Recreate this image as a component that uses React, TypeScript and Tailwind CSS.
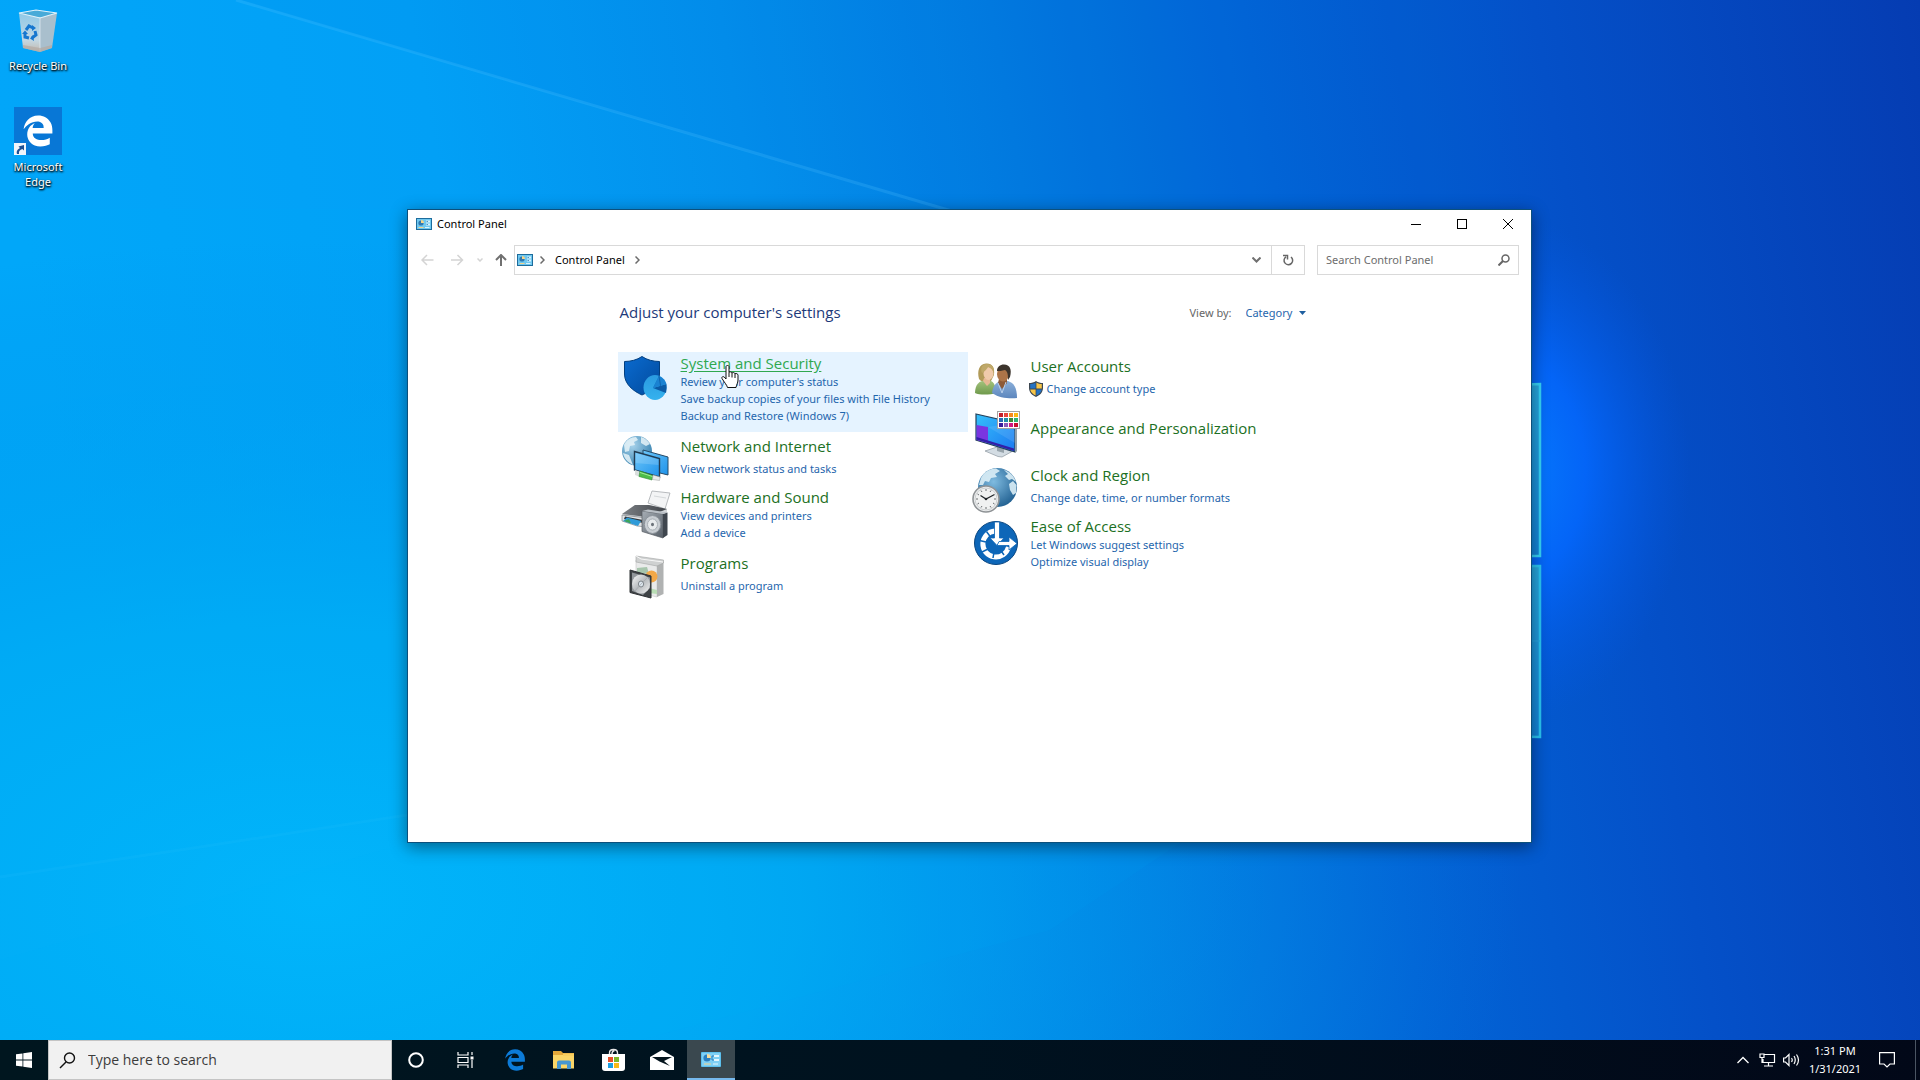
import React, { useState } from "react";

type Category = {
  title: string;
  links: string[];
  icon: React.ReactNode;
  hovered?: boolean;
  shield?: boolean;
};

const EDGE_PATH =
  "M486.286 243.671c0-44.032-7.754-84.465-28.801-122.4C416.498 47.879 343.912 8.001 258.893 8.001 118.962 7.724 40.617 113.214 26.056 227.679c42.429-61.312 117.073-121.376 220.375-124.966 0 0 109.666 0 99.419 104.957H169.997c6.369-37.386 18.554-58.986 34.339-78.926-75.048 34.893-121.85 96.096-120.742 188.315.83 71.448 50.124 144.836 120.743 171.976 83.357 31.843 192.776 7.2 240.132-21.324V363.307c-80.864 56.494-270.871 60.925-272.255-67.572h314.073v-52.064z";

const EdgeLogo = ({ className }: { className: string }) => (
  <svg viewBox="0 0 512 512" className={className} fill="currentColor" aria-hidden="true">
    <path d={EDGE_PATH} />
  </svg>
);

const Wallpaper = () => (
  <svg
    className="absolute inset-0 size-full"
    viewBox="0 0 1920 1080"
    preserveAspectRatio="xMidYMid slice"
    aria-hidden="true"
  >
    <defs>
      <linearGradient id="sky" x1="0" y1="0.1" x2="1" y2="0">
        <stop offset="0" stopColor="#02a6f9" />
        <stop offset="0.22" stopColor="#02a0f6" />
        <stop offset="0.38" stopColor="#0390ec" />
        <stop offset="0.52" stopColor="#027be0" />
        <stop offset="0.65" stopColor="#0264d6" />
        <stop offset="0.8" stopColor="#0450c8" />
        <stop offset="1" stopColor="#053cb2" />
      </linearGradient>
      <radialGradient id="lowerGlow" gradientUnits="userSpaceOnUse" cx="320" cy="900" r="1200" gradientTransform="matrix(1 0 0 0.55 0 405)">
        <stop offset="0" stopColor="#02b6fb" stopOpacity="0.95" />
        <stop offset="0.4" stopColor="#00aef4" stopOpacity="0.7" />
        <stop offset="1" stopColor="#008ae8" stopOpacity="0" />
      </radialGradient>
      <radialGradient id="logoGlow" gradientUnits="userSpaceOnUse" cx="1500" cy="470" r="190" gradientTransform="matrix(1 0 0 1.35 0 -164)">
        <stop offset="0" stopColor="#0680ff" />
        <stop offset="0.45" stopColor="#0468ff" stopOpacity="0.85" />
        <stop offset="1" stopColor="#0458e4" stopOpacity="0" />
      </radialGradient>
      <linearGradient id="pane" x1="0" y1="0" x2="0" y2="1">
        <stop offset="0" stopColor="#27a8e0" />
        <stop offset="1" stopColor="#1384da" />
      </linearGradient>
    </defs>
    <rect width="1920" height="1080" fill="url(#sky)" />
    <rect width="1920" height="1080" fill="url(#lowerGlow)" />
    <path d="M240 0L960 215H1500V0z" fill="#0060d8" opacity="0.08" />
    <path d="M236 0L955 212" stroke="#4cc0ff" strokeWidth="3" opacity="0.25" />
    <path d="M0 876L200 846L407 814V209H0z" fill="#00b8ff" opacity="0.06" />
    <path d="M0 877L200 847L407 815" stroke="#30c8ff" strokeWidth="3" fill="none" opacity="0.12" />
    <path d="M407 843H1180L1050 930L640 1040H0V960z" fill="#00c0ff" opacity="0.06" />
    <rect width="1920" height="1080" fill="url(#logoGlow)" />
    <path d="M1300 392L1540 384V556H1300z" fill="url(#pane)" stroke="#35d4f8" strokeWidth="2.5" />
    <path d="M1300 566H1540V737L1300 733z" fill="url(#pane)" stroke="#29c6f4" strokeWidth="2.5" />
    <path d="M1300 641H1540" stroke="#29a6e4" />
  </svg>
);

const PanelIcon = ({ className }: { className: string }) => (
  <svg viewBox="0 0 16 12" className={className} aria-hidden="true">
    <rect width="16" height="12" fill="#1d6c9c" />
    <rect x="1" y="1" width="14" height="10" fill="#6fc8f0" />
    <circle cx="5" cy="5" r="2.6" fill="#2f78b0" />
    <path d="M5 5V2A3 3 0 0 1 8 5z" fill="#f6d58a" />
    <path d="M10 2.5h4v2h-4zM10 5.5h4v2h-4z" fill="#d8f2fd" />
    <path d="M10.5 3.5h1.5M10.5 6.5h1.5" stroke="#2f78b0" strokeWidth="0.8" />
    <path d="M2.5 9.5h5" stroke="#f3d38c" />
    <path d="M9 9.5h4.5" stroke="#d8f2fd" />
  </svg>
);

const TaskbarPanelIcon = () => (
  <svg viewBox="0 0 20 15" className="h-[15px] w-5" aria-hidden="true">
    <rect width="20" height="15" rx="1" fill="#5cc0ee" />
    <rect x="1" y="1" width="18" height="13" fill="#7fd0f5" />
    <circle cx="6" cy="6" r="3.6" fill="#2b7fc0" />
    <path d="M6 6V2A4 4 0 0 1 10 6z" fill="#f7dc9a" />
    <path d="M13 3h5v2h-5zM13 7h5v2h-5z" fill="#e4f6fd" />
    <path d="M11 6V4h2M11 6v2h2" stroke="#2b7fc0" fill="none" />
    <path d="M3 12h7" stroke="#f3d38c" />
    <path d="M12 12h5" stroke="#e4f6fd" />
  </svg>
);

const SystemIcon = () => (
  <svg viewBox="0 0 48 48" className="size-12 overflow-visible" aria-hidden="true">
    <defs>
      <linearGradient id="shieldFill" x1="0" y1="0" x2="1" y2="1">
        <stop offset="0" stopColor="#0a6bd0" />
        <stop offset="1" stopColor="#024a9c" />
      </linearGradient>
      <linearGradient id="pieFill" x1="0" y1="0" x2="0" y2="1">
        <stop offset="0" stopColor="#2a9ae0" />
        <stop offset="1" stopColor="#35b2ee" />
      </linearGradient>
    </defs>
    <path d="M21 1.500C16 5 9.500 6.500 3.500 6.500V19C3.500 29 12 36 21 40C30 36 38.500 29 38.500 19V6.500C32.500 6.500 26 5 21 1.500z" fill="url(#shieldFill)" stroke="#023f80" />
    <ellipse cx="34" cy="32.500" rx="11.500" ry="12.500" fill="url(#pieFill)" />
    <path d="M32 33L38 21L41 27z" fill="#0f6cbc" />
    <path d="M32 33L45.500 29Q46 33 45 38z" fill="#0a5aa6" />
    <path d="M38 21Q44 23.500 45.500 29L32 33z" fill="#1a82d2" />
    <path d="M38 21L39.500 30.500L45 37" stroke="#0a5aa6" strokeWidth="0.800" fill="none" />
  </svg>
);

const NetworkIcon = () => (
  <svg viewBox="0 0 48 48" className="size-12 overflow-visible" aria-hidden="true">
    <defs>
      <radialGradient id="netGlobe" cx="0.35" cy="0.3" r="0.8">
        <stop offset="0" stopColor="#a9d4ec" />
        <stop offset="1" stopColor="#2f7cab" />
      </radialGradient>
      <linearGradient id="netScreen" x1="0" y1="0" x2="1" y2="1">
        <stop offset="0" stopColor="#6cc6fa" />
        <stop offset="1" stopColor="#1f93ea" />
      </linearGradient>
    </defs>
    <circle cx="16" cy="16" r="15" fill="url(#netGlobe)" />
    <path d="M3 10C5 5 10 2 15 2l2 3-4 2 1 3-5 1-1 5-4 1zM20 2c4 1 7 4 9 7l-4 2-5-3zM2 18l6 2 2 5 2 5C6 27 3 23 2 18z" fill="#e6f3f8" opacity="0.85" />
    <path d="M22 15L47 22V40L39 38L22 32z" fill="url(#netScreen)" stroke="#274a66" />
    <path d="M13.500 16.500L38.500 23.500V42L13.500 35z" fill="url(#netScreen)" stroke="#223c52" strokeWidth="1.400" />
    <path d="M14.500 18L37.500 24.500V30L14.500 28z" fill="#fff" opacity="0.16" />
    <path d="M14 35L20 37L19 42L14 40z" fill="#d9dedd" />
    <path d="M19 36L32 40.500L31 45L18 41.500z" fill="#4cbd48" stroke="#2f8d35" strokeWidth="0.600" />
    <path d="M19 37.500L31.500 41.500" stroke="#a2ea98" />
    <path d="M32 40L39 42L38.500 45.500L31.500 44.500z" fill="#e8ebea" stroke="#9a9f9d" strokeWidth="0.500" />
  </svg>
);

const HardwareIcon = () => (
  <svg viewBox="0 0 48 48" className="size-12 overflow-visible" aria-hidden="true">
    <defs>
      <linearGradient id="printerTop" x1="0" y1="0" x2="1" y2="0">
        <stop offset="0" stopColor="#7c8085" />
        <stop offset="1" stopColor="#3f4348" />
      </linearGradient>
      <linearGradient id="speakerFace" x1="0" y1="0" x2="1" y2="1">
        <stop offset="0" stopColor="#a6adb4" />
        <stop offset="1" stopColor="#565e67" />
      </linearGradient>
    </defs>
    <path d="M31 2L49 4L44 20L27 14z" fill="#f3f4f5" stroke="#a7abaf" strokeWidth="0.800" />
    <path d="M33 7L45 9" stroke="#d5d8da" />
    <path d="M14 16L28 16L46 20V29L28 36L1 30V26z" fill="#d3d6d9" />
    <path d="M14 16L28 16L46 20L26 28L1 25z" fill="url(#printerTop)" />
    <path d="M1 26L26 29V38L16 37L1 32z" fill="#e2e4e6" stroke="#70757a" strokeWidth="0.600" />
    <path d="M4 27.500L22 31V34L3 30z" fill="#33383d" />
    <path d="M6 28.500L20 32L17 37L2 32z" fill="#2f9ad8" />
    <path d="M3 32L8 30L10 34.500z" fill="#3fa557" />
    <path d="M21 22L42 25V49L21 42.500z" fill="url(#speakerFace)" stroke="#565c63" strokeWidth="0.700" />
    <path d="M42 25L46.500 23.500V46L42 49z" fill="#3f464e" />
    <path d="M21 22L27 20.500L46.500 23.500L42 25z" fill="#b9bfc5" />
    <ellipse cx="31.500" cy="35.500" rx="8.200" ry="9" fill="#c9ced3" stroke="#8d949b" />
    <ellipse cx="31.500" cy="35.500" rx="5" ry="5.600" fill="#e8ebed" stroke="#a8afb5" />
    <ellipse cx="31.500" cy="35.500" rx="1.500" ry="1.800" fill="#6b7279" />
  </svg>
);

const ProgramsIcon = () => (
  <svg viewBox="0 0 48 48" className="size-12 overflow-visible" aria-hidden="true">
    <defs>
      <linearGradient id="disc" x1="0" y1="0" x2="1" y2="1">
        <stop offset="0" stopColor="#fafafa" />
        <stop offset="0.500" stopColor="#b6babd" />
        <stop offset="1" stopColor="#f3f3f3" />
      </linearGradient>
    </defs>
    <path d="M15 8L36 12V45L15 40z" fill="#e9eaea" stroke="#c6c7c7" strokeWidth="0.600" />
    <path d="M36 12L42.500 9.500V42L36 45z" fill="#b0b2b2" />
    <path d="M15 4L42.500 8L42.500 11L36 14L15 10z" fill="#cfd1d1" stroke="#a3a5a5" strokeWidth="0.600" />
    <path d="M15 4L20 7L42 10" stroke="#f7f7f7" fill="none" />
    <path d="M16 16L26 15L28 22L16 21z" fill="#a7c5ac" />
    <circle cx="30.500" cy="24.500" r="6" fill="#f3a847" />
    <path d="M28 36L36 38V42L28 41z" fill="#b9ddb4" />
    <path d="M9 18L30 24V46L9 40.500z" fill="#3f4346" stroke="#2f3235" />
    <path d="M11 20.500L29 25.500V36L22 43L11 39z" fill="#92979b" />
    <ellipse cx="20" cy="32" rx="9" ry="9.500" fill="url(#disc)" />
    <ellipse cx="20" cy="32" rx="2.600" ry="3" fill="#dce6ee" stroke="#80868b" />
    <path d="M20 32L26 26M20 32L14 39" stroke="#a3a8ac" strokeWidth="0.700" />
  </svg>
);

const UsersIcon = () => (
  <svg viewBox="0 0 48 48" className="size-12 overflow-visible" aria-hidden="true">
    <defs>
      <linearGradient id="greenShirt" x1="0" y1="0" x2="0" y2="1">
        <stop offset="0" stopColor="#a5c37e" />
        <stop offset="1" stopColor="#6f9a4c" />
      </linearGradient>
      <linearGradient id="blueShirt" x1="0" y1="0" x2="0" y2="1">
        <stop offset="0" stopColor="#8cb0da" />
        <stop offset="1" stopColor="#5c86bd" />
      </linearGradient>
    </defs>
    <path d="M8 24C6 16 8 9 15 8.500C21 8 24 12 23 20L20 26H10z" fill="#b19a58" />
    <path d="M4 38C4 29 9 25.500 14 25.500H19C23 27 25 31 25 38C19 40 8 40 4 38z" fill="url(#greenShirt)" />
    <path d="M13 23H19V28L16 31L12 26z" fill="#e6b894" />
    <ellipse cx="17.500" cy="18.500" rx="5" ry="6.500" fill="#efcaaa" />
    <path d="M11 18C13 17 16 14 17 12C20 13 22 15 22.500 18C24 12 20 9 16 9C11 9 9 13 11 18z" fill="#bfa869" />
    <path d="M21 38C22 30 26 26 31 26H37C43 28 46 33 46 43C39 44 28 43 21 38z" fill="url(#blueShirt)" />
    <path d="M28 24H36V28L31 34L27 28z" fill="#8d5a37" />
    <ellipse cx="32" cy="19" rx="6" ry="7.500" fill="#ac7448" />
    <path d="M26 16C26 12 29 9.500 33 9.500C39 10 41 14 39 22L37 25C37 20 37 17 34 15C31 16 28 16 26 16z" fill="#3c342c" />
    <path d="M27 28L31 38L35 27" fill="none" stroke="#b9cfea" />
  </svg>
);

const SWATCHES = ["#c4202b", "#e8453c", "#f58a1f", "#fdb813", "#2b6cb5", "#1f8fa8", "#3f8a3a", "#2fb574", "#3a1d9c", "#8a5cb8", "#d01880", "#c8102e"];

const AppearanceIcon = () => (
  <svg viewBox="0 0 48 48" className="size-12 overflow-visible" aria-hidden="true">
    <defs>
      <linearGradient id="screen" x1="0" y1="0" x2="1" y2="1">
        <stop offset="0" stopColor="#35c0fb" />
        <stop offset="1" stopColor="#1c78f0" />
      </linearGradient>
    </defs>
    <path d="M14 42L26 38L41 42.500L31 48L27 47.500z" fill="#d3dce3" stroke="#8c979f" strokeWidth="0.700" />
    <path d="M26 38L33 40V44L26 42z" fill="#97a3ab" />
    <path d="M5 5L44 14V43L5 31z" fill="url(#screen)" stroke="#23405a" strokeWidth="1.200" />
    <path d="M44 14L46 13.500V42.500L44 43z" fill="#93a0aa" />
    <path d="M5.500 16L17 18V34L5.500 31z" fill="#7a35e0" />
    <path d="M5.500 28L43 39.500V42L5.500 30.500z" fill="#321fa8" />
    <path d="M17 18L36 15L44 22V34z" fill="#fff" opacity="0.1" />
    <rect x="26.500" y="2.500" width="22" height="17" fill="#fff" stroke="#a3a3a3" />
    {SWATCHES.map((color, i) => (
      <rect key={color} x={28 + (i % 4) * 5} y={4 + Math.floor(i / 4) * 5} width="4" height="4" fill={color} />
    ))}
  </svg>
);

const ClockIcon = () => (
  <svg viewBox="0 0 48 48" className="size-12 overflow-visible" aria-hidden="true">
    <defs>
      <radialGradient id="clockGlobe" cx="0.400" cy="0.350" r="0.700">
        <stop offset="0" stopColor="#7fbbe0" />
        <stop offset="1" stopColor="#205f90" />
      </radialGradient>
    </defs>
    <circle cx="26.500" cy="23.500" r="19.500" fill="url(#clockGlobe)" />
    <path d="M10 14C13 8 18 5 25 4.500L29 7L24 10L26 13L20 14L18 18L14 17L12 21L8 21zM33 6C39 8 43 12 45 18L41 15L38 16L34 12L37 10zM38 20L42 17L45.500 21L45 29L42 31L39 26z" fill="#dceef6" opacity="0.9" />
    <circle cx="15" cy="35" r="13" fill="#eeeff0" stroke="#8f9396" strokeWidth="1.600" />
    <circle cx="15" cy="35" r="11" fill="#f0f1f1" stroke="#c3c6c8" strokeWidth="0.800" />
    <path d="M15 25v2M15 43v2M5 35h2M23 35h2M10 26.500l1 1.500M20 26.500l-1 1.500M10 43.500l1-1.500M20 43.500l-1-1.500M6.500 30l1.500 1M6.500 40l1.500-1M23.500 40l-1.500-1" stroke="#6a6e71" />
    <path d="M9.500 31.500L15 35L23.500 30.500" fill="none" stroke="#22262a" strokeWidth="1.300" />
    <circle cx="15" cy="35" r="1.300" fill="#22262a" />
  </svg>
);

const EaseIcon = () => (
  <svg viewBox="0 0 48 48" className="size-12 overflow-visible" aria-hidden="true">
    <circle cx="25" cy="25" r="21.500" fill="#0d66b8" stroke="#0a4680" />
    <path d="M24 13A13 13 0 1 0 37.500 29" fill="none" stroke="#fff" strokeWidth="5" />
    <path d="M15.500 13.500L19.500 19M8.500 22.500L15 24M11 34L17 31M22 40L23 34M33 37L29.500 32" stroke="#0d66b8" strokeWidth="1.500" />
    <path d="M23.500 4H28.500V20H33L26 27.500L19 20H23.500z" fill="#fff" stroke="#0d66b8" strokeWidth="0.800" />
    <path d="M28 23.500H38V19L46 25.500L38 32V27.500H26z" fill="#fff" stroke="#0d66b8" strokeWidth="0.800" />
  </svg>
);

const UacShield = () => (
  <svg viewBox="0 0 14 16" className="h-4 w-3.5" aria-hidden="true">
    <path d="M7 0C5 1.500 2.500 2 0 2V7C0 11.500 3.500 14.500 7 16C10.500 14.500 14 11.500 14 7V2C11.500 2 9 1.500 7 0z" fill="#3b4650" />
    <path d="M6.600 1.500C5 2.600 3 3 1.200 3V7.600H6.600z" fill="#2372c4" />
    <path d="M7.400 1.500C9 2.600 11 3 12.800 3V7.600H7.400z" fill="#f7c548" />
    <path d="M1.200 8.400H6.600V14.500C4 13.200 1.600 11.200 1.200 8.400z" fill="#f7c548" />
    <path d="M12.800 8.400H7.400V14.500C10 13.200 12.400 11.200 12.800 8.400z" fill="#2372c4" />
  </svg>
);

const LEFT: Category[] = [
  {
    title: "System and Security",
    links: ["Review your computer's status", "Save backup copies of your files with File History", "Backup and Restore (Windows 7)"],
    icon: <SystemIcon />,
    hovered: true,
  },
  { title: "Network and Internet", links: ["View network status and tasks"], icon: <NetworkIcon /> },
  { title: "Hardware and Sound", links: ["View devices and printers", "Add a device"], icon: <HardwareIcon /> },
  { title: "Programs", links: ["Uninstall a program"], icon: <ProgramsIcon /> },
];

const RIGHT: Category[] = [
  { title: "User Accounts", links: ["Change account type"], icon: <UsersIcon />, shield: true },
  { title: "Appearance and Personalization", links: [], icon: <AppearanceIcon /> },
  { title: "Clock and Region", links: ["Change date, time, or number formats"], icon: <ClockIcon /> },
  { title: "Ease of Access", links: ["Let Windows suggest settings", "Optimize visual display"], icon: <EaseIcon /> },
];

const CategoryTile = ({ item }: { item: Category }) => {
  const tall = item.links.length > 1;
  return (
    <li className={`flex gap-3 pl-[3px] ${item.hovered ? "bg-[#e5f3ff]" : ""} ${tall ? "pb-2" : "pb-[3px]"}`}>
      <div className="pt-[3px]">{item.icon}</div>
      <div className={tall ? "pt-px" : item.links.length ? "pt-1" : "pt-3 pb-4"}>
        <h2 className="font-['Open_Sans',sans-serif] text-[15px] leading-5">
          <a href="#" className={item.hovered ? "text-[#2fa84f] underline underline-offset-2" : "text-[#1c7023]"}>
            {item.title}
          </a>
        </h2>
        <ul className={`text-[11px] leading-[17px] text-[#1f66ad] ${tall ? "" : "pt-1"}`}>
          {item.links.map((link) => (
            <li key={link} className={item.shield ? "-ml-0.5 flex items-center gap-1" : ""}>
              {item.shield && <UacShield />}
              <a href="#">{link}</a>
            </li>
          ))}
        </ul>
      </div>
    </li>
  );
};

const TitleBar = () => (
  <header className="flex h-7 items-center pl-2">
    <PanelIcon className="h-3 w-4" />
    <h1 className="ml-[5px] flex-1 text-[11px] text-black">Control Panel</h1>
    <button type="button" aria-label="Minimize" className="grid h-full w-[46px] place-items-center">
      <svg width="10" height="10" shapeRendering="crispEdges"><path d="M0 5.500h10" stroke="#000" /></svg>
    </button>
    <button type="button" aria-label="Maximize" className="grid h-full w-[46px] place-items-center">
      <svg width="10" height="10"><rect x="0.500" y="0.500" width="9" height="9" fill="none" stroke="#000" /></svg>
    </button>
    <button type="button" aria-label="Close" className="grid h-full w-[46px] place-items-center">
      <svg width="10" height="10"><path d="M0 0L10 10M10 0L0 10" stroke="#000" /></svg>
    </button>
  </header>
);

const Chevron = () => (
  <svg width="5" height="8" fill="none" stroke="#6b6b6b" strokeWidth="1.500" aria-hidden="true"><path d="M0.500 0.500L4 4L0.500 7.500" /></svg>
);

const NavBar = () => (
  <div className="flex h-[30px] pr-3">
    <div className="flex w-[106px] items-center pl-[13px]">
      <button type="button" aria-label="Back" className="w-[30px]">
        <svg width="13" height="12" fill="none" stroke="#d4d4d4" strokeWidth="1.500"><path d="M12.500 6H1M6 1L1 6L6 11" /></svg>
      </button>
      <button type="button" aria-label="Forward" className="w-[26px]">
        <svg width="13" height="12" fill="none" stroke="#d4d4d4" strokeWidth="1.500"><path d="M0 6H11.500M6.500 1L11.500 6L6.500 11" /></svg>
      </button>
      <button type="button" aria-label="Recent locations" className="w-[18px]">
        <svg width="6" height="4" fill="none" stroke="#d4d4d4" strokeWidth="1.500"><path d="M0.500 0.500L3 3L5.500 0.500" /></svg>
      </button>
      <button type="button" aria-label="Up">
        <svg width="12" height="12" fill="none" stroke="#707070" strokeWidth="2"><path d="M6 12V1M1 6L6 1L11 6" /></svg>
      </button>
    </div>
    <div className="flex flex-1 border border-[#d9d9d9]">
      <nav aria-label="Address" className="flex flex-1 items-center pl-0.5 text-[11px] text-black">
        <PanelIcon className="mr-[7px] h-3 w-4" />
        <Chevron />
        <button type="button" className="mx-2.5">Control Panel</button>
        <Chevron />
      </nav>
      <button type="button" aria-label="Previous locations" className="grid w-[30px] place-items-center">
        <svg width="9" height="6" fill="none" stroke="#707070" strokeWidth="2"><path d="M0.500 0.500L4.500 4.500L8.500 0.500" /></svg>
      </button>
      <button type="button" aria-label="Refresh" className="grid w-[33px] place-items-center border-l border-[#d9d9d9]">
        <svg width="12" height="12" fill="none" stroke="#666" strokeWidth="1.500"><path d="M9 3A4.300 4.300 0 1 1 4 2.800M1 1.500H5.500V5.500" /></svg>
      </button>
    </div>
    <label className="ml-3 flex w-[202px] items-center border border-[#d9d9d9] pr-2 pl-2">
      <input
        type="text"
        aria-label="Search Control Panel"
        placeholder="Search Control Panel"
        className="min-w-0 flex-1 text-[11px] outline-none placeholder:text-[#6d6d6d]"
      />
      <svg width="12" height="12" fill="none" stroke="#666" strokeWidth="1.500" aria-hidden="true"><circle cx="7.500" cy="4.500" r="3.500" /><path d="M5 7L0.500 11.500" strokeWidth="2" /></svg>
    </label>
  </div>
);

const HandCursor = () => (
  <svg viewBox="0 0 18 24" className="pointer-events-none absolute top-[365px] left-[721px] h-6 w-[18px]" aria-hidden="true">
    <path
      d="M5 1.500C5 0.200 8 0.200 8 1.500V7.500C8.500 6.500 10.700 6.700 11 8C11.700 7.200 13.700 7.500 14 8.700C15 8.200 17 8.700 17 10.200V15C17 18 15.500 19.500 15 22.500H6.500C6 20 3 17 1 13.500C0.300 12 2 11 3.200 12L5 14z"
      fill="#fff"
      stroke="#111"
    />
    <path d="M8 7.500V12M11 8V12.500M14 8.700V13" stroke="#111" />
  </svg>
);

const ControlPanelWindow = () => (
  <main className="absolute top-[209px] left-[407px] flex h-[634px] w-[1125px] flex-col border border-[#0c507c] bg-white shadow-[0_4px_16px_rgba(0,0,0,0.45)]">
    <TitleBar />
    <div className="h-[7px]" />
    <NavBar />
    <div className="mx-auto mt-[27px] w-[704px] pr-1">
      <div className="flex items-end pr-3 pl-0.5">
        <p className="flex-1 font-['Open_Sans',sans-serif] text-[15px] leading-5 text-[#1d3a7a]">Adjust your computer's settings</p>
        <label htmlFor="view-by" className="text-[11px] leading-[18px] text-[#666]">View by:</label>
        <select id="view-by" className="ml-3.5 cursor-pointer appearance-none text-[11px] leading-[18px] text-[#1f66ad] outline-none">
          <option>Category</option>
        </select>
        <svg width="7" height="4" className="mb-[7px] ml-1.5" aria-hidden="true"><path d="M0 0H7L3.500 4z" fill="#1f5fa0" /></svg>
      </div>
      <div className="mt-[30px] grid grid-cols-2 items-start">
        <ul>
          {LEFT.map((item) => <CategoryTile key={item.title} item={item} />)}
        </ul>
        <ul>
          {RIGHT.map((item) => <CategoryTile key={item.title} item={item} />)}
        </ul>
      </div>
    </div>
  </main>
);

const RecycleBin = () => (
  <svg viewBox="0 0 48 48" className="size-12" aria-hidden="true">
    <defs>
      <linearGradient id="binSide" x1="0" y1="0" x2="0" y2="1">
        <stop offset="0" stopColor="#8fc9e8" />
        <stop offset="0.700" stopColor="#c3d7e2" />
        <stop offset="1" stopColor="#c4b9ae" />
      </linearGradient>
    </defs>
    <path d="M5 9L26 13L26 48L9 44z" fill="url(#binSide)" />
    <path d="M26 13L43 9L38 44L26 48z" fill="#a9bfcd" />
    <path d="M5 9L22 6L43 9L26 14z" fill="#48aad8" stroke="#e2f2fa" strokeWidth="1.200" />
    <path d="M26 13V47" stroke="#dfeaf0" strokeWidth="0.800" />
    <path d="M9 41L26 44L38 41V44L26 48L9 44z" fill="#b3aaa2" opacity="0.7" />
    <g fill="none" stroke="#1677cf" strokeWidth="3">
      <path d="M12 26L15 22L19 24" />
      <path d="M21 27L22 31L18 34" />
      <path d="M15 34L11 33L11 29" />
    </g>
    <path d="M18 21L22 24L18 27zM19 31L16 34.500L20 37zM8 30L11 26.500L14 30z" fill="#1677cf" />
  </svg>
);

const DesktopIcons = () => (
  <nav aria-label="Desktop" className="relative flex w-[76px] flex-col gap-[34px] pt-1 text-center text-[11px] leading-[15px] text-white [text-shadow:1px_1px_2px_#000,0_1px_2px_#000]">
    <a href="#" className="flex flex-col items-center gap-1.5">
      <RecycleBin />
      Recycle Bin
    </a>
    <a href="#" className="flex flex-col items-center gap-1">
      <span className="relative grid size-12 place-items-center bg-[#0877d6]">
        <EdgeLogo className="size-8" />
        <svg viewBox="0 0 12 12" className="absolute bottom-0 left-0 size-3 bg-[#f1f5fa]" aria-hidden="true">
          <path d="M3 11C2 8 4 6 6 5L4.500 3.500L10 2V7.500L8.300 6C6 7 4.500 8 5 11z" fill="#1d4f94" />
        </svg>
      </span>
      <span>Microsoft<br />Edge</span>
    </a>
  </nav>
);

const TASK_BUTTON = "grid h-10 w-12 place-items-center";

const Taskbar = () => {
  const [query, setQuery] = useState("");
  return (
    <footer className="relative flex h-10 bg-linear-to-r from-[#00161f] via-[#00121f] to-[#020818] text-white">
      <button type="button" aria-label="Start" className={TASK_BUTTON}>
        <svg width="16" height="16" fill="#fff"><path d="M0 2.300L6.500 1.400V7.600H0zM7.300 1.300L16 0V7.600H7.300zM0 8.400H6.500V14.600L0 13.700zM7.300 8.400H16V16L7.300 14.700z" /></svg>
      </button>
      <label className="flex w-[344px] items-center gap-3 border border-[#c4c4c4] bg-[#f1f1f1] pl-2.5">
        <svg width="17" height="17" fill="none" stroke="#111" strokeWidth="1.400" aria-hidden="true"><circle cx="10.500" cy="6" r="5" /><path d="M7 10L1 16" /></svg>
        <input
          type="text"
          aria-label="Type here to search"
          placeholder="Type here to search"
          value={query}
          onChange={(e) => setQuery(e.target.value)}
          className="flex-1 font-['Open_Sans',sans-serif] text-sm text-black outline-none placeholder:text-[#3c3c3c]"
        />
      </label>
      <div className="flex flex-1 gap-px">
        <button type="button" aria-label="Cortana" className={TASK_BUTTON}>
          <svg width="16" height="16" fill="none" stroke="#fff" strokeWidth="2"><circle cx="8" cy="8" r="6.800" /></svg>
        </button>
        <button type="button" aria-label="Task View" className={TASK_BUTTON}>
          <svg width="17" height="16" fill="none" stroke="#fff" strokeWidth="1.200"><path d="M1 0V3H11V0M1 16V13H11V16M1 5.500H11V10.500H1zM15 0V3M15 8V16" /><path d="M13.500 4.500h3v3h-3z" fill="#fff" stroke="none" /></svg>
        </button>
        <button type="button" aria-label="Microsoft Edge" className={`${TASK_BUTTON} ml-px text-[#0c7bd8]`}>
          <EdgeLogo className="size-[22px]" />
        </button>
        <button type="button" aria-label="File Explorer" className={TASK_BUTTON}>
          <svg width="22" height="18">
            <path d="M0 0H8L10 2H21V17H0z" fill="#e5a93a" />
            <path d="M0 4H21V17.500H0z" fill="#fbd667" />
            <path d="M10 2.500H21V5H10z" fill="#f8cf5f" />
            <path d="M4 18V11.500Q4 9.500 6 9.500H16Q18 9.500 18 11.500V18H14V13.500H8V18z" fill="#4596d0" />
          </svg>
        </button>
        <button type="button" aria-label="Microsoft Store" className={TASK_BUTTON}>
          <svg width="23" height="24">
            <path d="M7.500 7V5Q7.500 1.500 11.500 1.500T15.500 5V7M10 6Q10 3 12.500 2.500" fill="none" stroke="#e6e6e6" strokeWidth="1.400" />
            <path d="M0 6H23V20Q23 23 20 23H3Q0 23 0 20z" fill="#fff" />
            <path d="M6 9H11V14H6z" fill="#e8502a" />
            <path d="M12 9H17V14H12z" fill="#7db82a" />
            <path d="M6 15H11V20H6z" fill="#1c9fe2" />
            <path d="M12 15H17V20H12z" fill="#f9b917" />
          </svg>
        </button>
        <button type="button" aria-label="Mail" className={TASK_BUTTON}>
          <svg width="24" height="20"><path d="M0 7L12 0L24 7V20H0z" fill="#fff" /><path d="M2 7H22L14 11L20 16L9.500 11.500z" fill="#04141d" /></svg>
        </button>
        <button type="button" aria-label="Control Panel" className={`${TASK_BUTTON} border-b-2 border-[#76b9ed] bg-[#3a484f]`}>
          <TaskbarPanelIcon />
        </button>
      </div>
      <div className="flex items-center">
        <button type="button" aria-label="Show hidden icons" className="grid w-6 place-items-center">
          <svg width="12" height="8" fill="none" stroke="#fff" strokeWidth="1.300"><path d="M0.500 7L6 1.500L11.500 7" /></svg>
        </button>
        <button type="button" aria-label="Network" className="grid w-6 place-items-center">
          <svg width="17" height="14" fill="none" stroke="#fff" strokeWidth="1.200"><path d="M5 1.500H15.500V9.500H4V6M9.500 9.500V12.500M5 13H14M1 1H5V4.500H1zM3 4.500V10" /></svg>
        </button>
        <button type="button" aria-label="Volume" className="grid w-6 place-items-center">
          <svg width="17" height="14" fill="none" stroke="#fff" strokeWidth="1.200"><path d="M0.600 5H2.500L6 1.500V12.500L2.500 9H0.600zM8.500 5Q10 7 8.500 9M11 3Q13.500 7 11 11M13.500 1.500Q17.500 7 13.500 12.500" /></svg>
        </button>
        <time dateTime="2021-01-31T13:31" className="w-16 text-center text-[11px] leading-[18px]">1:31 PM<br />1/31/2021</time>
        <button type="button" aria-label="Notifications" className="mr-2.5 ml-0.5 grid w-9 place-items-center">
          <svg width="16" height="16" fill="none" stroke="#fff" strokeWidth="1.200"><path d="M0.600 0.600H15.400V12H11L8 15L5 12H0.600z" /></svg>
        </button>
        <button type="button" aria-label="Show desktop" className="h-10 w-[5px] border-l border-[#4b5563]" />
      </div>
    </footer>
  );
};

export default function App() {
  return (
    <div className="relative flex min-h-screen flex-col overflow-hidden bg-[#0279df] font-['Noto_Sans','Open_Sans',sans-serif]">
      <Wallpaper />
      <div className="flex-1">
        <DesktopIcons />
      </div>
      <ControlPanelWindow />
      <Taskbar />
      <HandCursor />
    </div>
  );
}
